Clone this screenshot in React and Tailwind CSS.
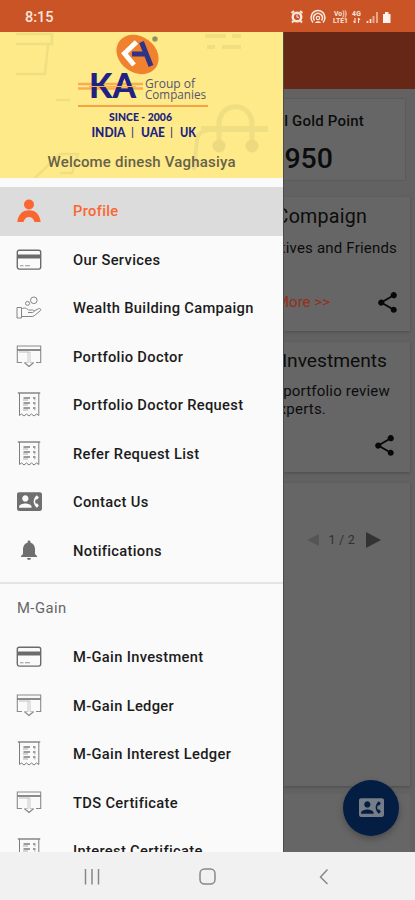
import { MdContactPhone, MdNotifications, MdShare } from 'react-icons/md';

function ProfileIcon() {
  return (
    <svg width="26" height="26" viewBox="0 0 26 26" fill="#fb6630">
      <circle cx="13" cy="6.500" r="5" />
      <path d="M1.300 24C2 17 6 12.300 13 12.300S24 17 24.700 24H18.500C17.500 20.500 15.500 19 13 19S8.500 20.500 7.500 24Z" />
    </svg>
  );
}

function CardIcon() {
  return (
    <svg width="26" height="26" viewBox="0 0 26 26" fill="none" stroke="#6b6b6b">
      <rect x="1.300" y="3.300" width="23.400" height="18.800" rx="2" strokeWidth="1.400" />
      <path d="M1.500 9.500H24.500" strokeWidth="4" />
      <path d="M4 18.700H7.500M9 18.700H14" strokeWidth="1.100" stroke="#929292" />
    </svg>
  );
}

function HandIcon() {
  return (
    <svg width="26" height="26" viewBox="0 0 26 26" fill="none" stroke="#858585" strokeWidth="1" strokeLinejoin="round">
      <circle cx="17.800" cy="5.300" r="3.300" />
      <circle cx="11.500" cy="8.400" r="2" />
      <path d="M1 12.500H5.500V23H1ZM5.500 14C9 12 10.500 13.500 12.500 15H16.500C18.500 15 18.300 17.500 16.500 17.500H12M18 16L22.500 13.700C24.500 13 25.500 14.500 24 16L18.500 20.500C17.500 21.300 16.500 21.500 15 21.500H5.500" />
    </svg>
  );
}

function DownloadIcon() {
  return (
    <svg width="26" height="26" viewBox="0 0 26 26" fill="none" stroke="#8a8a8a">
      <path d="M6 18.500H1.300V2H24.700V18.500H20" strokeWidth="1.100" />
      <path d="M1.300 6H24.700" strokeWidth="1.700" stroke="#777777" />
      <path d="M3 8H12" strokeWidth="0.800" stroke="#b0b0b0" />
      <path d="M12 8V18.500H8.500L13 22.500L17.500 18.500H14V8Z" strokeWidth="0.700" stroke="#b5b5b5" />
      <path d="M8.500 18.800L13 22.500L17.500 18.800" strokeWidth="1.200" />
    </svg>
  );
}

function ReceiptIcon() {
  return (
    <svg width="26" height="26" viewBox="0 0 26 26" fill="none" stroke="#7d7d7d">
      <path d="M1.800 1H24.200" strokeWidth="1.400" />
      <path d="M3.500 1.300V23.500L5.500 22L8 24L10.500 22L13 24L15.500 22L18 24L20.500 22L22.800 23.500V1.300" strokeWidth="1" />
      <path d="M7.500 6H14M7.500 11H14M7.500 16H14M17 6H19.500M17 11H19.500M17 16H19.500" strokeWidth="1.500" />
      <path d="M7 8H12M7 13H12M7 18H12M18 7.800H19.500M18 12.800H19.500M18 17.800H19.500" strokeWidth="0.800" stroke="#999999" />
    </svg>
  );
}

function ContactIcon() {
  return <MdContactPhone size={25} color="#6f6f6f" className="-mt-[2px]" />;
}

function BellIcon() {
  return <MdNotifications size={24} color="#6f6f6f" className="-mt-[2px]" />;
}

const mainItems = [
  { label: 'Profile', icon: ProfileIcon, active: true },
  { label: 'Our Services', icon: CardIcon },
  { label: 'Wealth Building Campaign', icon: HandIcon },
  { label: 'Portfolio Doctor', icon: DownloadIcon },
  { label: 'Portfolio Doctor Request', icon: ReceiptIcon },
  { label: 'Refer Request List', icon: ReceiptIcon },
  { label: 'Contact Us', icon: ContactIcon },
  { label: 'Notifications', icon: BellIcon },
];

const gainItems = [
  { label: 'M-Gain Investment', icon: CardIcon },
  { label: 'M-Gain Ledger', icon: DownloadIcon },
  { label: 'M-Gain Interest Ledger', icon: ReceiptIcon },
  { label: 'TDS Certificate', icon: DownloadIcon },
  { label: 'Interest Certificate', icon: ReceiptIcon },
];

function MenuItem({ label, icon: Icon, active }) {
  return (
    <li className={`flex h-[48.5px] shrink-0 items-center pl-4 ${active ? 'bg-[#dcdcdc] text-[#fb6630]' : 'text-[#1c1c1c]'}`}>
      <span className="flex w-[26px] justify-center">
        <Icon />
      </span>
      <span className="ml-[31px] whitespace-nowrap text-[14.7px] font-medium leading-[22px] tracking-[0.33px]">{label}</span>
    </li>
  );
}

function StatusBar() {
  return (
    <div className="flex h-8 shrink-0 items-center justify-between bg-[#cb5427] pl-[25px] pr-[23px] pt-[2px] text-[#fbe6dc]">
      <span className="pt-[2px] text-[14.5px] font-medium">8:15</span>
      <svg width="102" height="16" viewBox="0 0 102 16" fill="none" stroke="#fbe6dc">
        {/* alarm */}
        <circle cx="7" cy="8" r="4.300" strokeWidth="2.400" />
        <path d="M1.500 4L4 2M12.500 4L10 2M3.500 12L2 13.500M10.500 12L12 13.500" strokeWidth="2" />
        <path d="M7 5.500V8.300H9" strokeWidth="1" />
        {/* hotspot */}
        <path d="M23 13.500A7 7 0 1 1 33 13.500M24.500 11.500A4.400 4.400 0 1 1 31.500 11.500" strokeWidth="1.500" />
        <circle cx="28" cy="9" r="1.700" strokeWidth="1.200" />
        <path d="M25 14C25.500 11.500 30.500 11.500 31 14Z" fill="#fbe6dc" stroke="none" />
        <g fill="#fbe6dc" stroke="none" fontWeight="700" fontSize="6.800">
          <text x="44" y="6.500" textLength="13">Vo))</text>
          <text x="43" y="14.300" textLength="15">LTE1</text>
          <text x="62" y="6.500" textLength="9">4G</text>
        </g>
        <path d="M65 9V14M63.500 12L65 14M68.500 14V9M70 11L68.500 9" strokeWidth="1.100" />
        {/* signal */}
        <path d="M77.500 14V12M80.500 14V10" strokeWidth="1.700" />
        <path d="M83.500 14V7M87 14V3" strokeWidth="2" stroke="#e7a78d" />
        {/* battery */}
        <path d="M93 5H95V3H98.500V5H100.500V14H93Z" fill="#fff3ec" stroke="none" />
      </svg>
    </div>
  );
}

function DrawerHeader() {
  return (
    <div className="h-[146px] shrink-0 bg-[#feea89]">
      <svg width="283" height="146" viewBox="0 0 283 146">
        {/* faint background shapes */}
        <g fill="none" stroke="#f0de82" strokeWidth="2.500">
          <path d="M16 2H52V12H16M48 13L45 42H16M56 68H70M35 146L60 122H78L72 141H60" />
          <path d="M194 138L197 108Q198 97 214 98" strokeWidth="4" />
          <path d="M205 4H226M232 4H241M207 15H215M222 15H241" strokeWidth="4" />
          <path d="M201 97H268" strokeWidth="6" />
          <path d="M219 109V92C219 69 252 69 252 92V109" strokeWidth="5" />
        </g>
        <g fill="#edda7e">
          <circle cx="219" cy="114" r="6.500" />
          <circle cx="252" cy="114" r="6.500" />
        </g>
        <ellipse cx="137.500" cy="22.500" rx="22.500" ry="18" transform="rotate(36 137.500 22.500)" fill="#f0812f" />
        <path d="M136.500 10L124.500 21.500L134 33" fill="none" stroke="#fff" strokeWidth="5" />
        <path d="M141.500 10L151 34M132 22H148" fill="none" stroke="#303485" strokeWidth="5" />
        <circle cx="155" cy="7" r="2.800" fill="#a49c64" />
        <path d="M153.800 8.500V5.800H155.500L156 8.500" fill="none" stroke="#72704e" strokeWidth="0.600" />
        <path d="M78 52H143M78 56.500H143" stroke="#f9ad50" strokeWidth="2.500" />
        <path d="M78 74H208" stroke="#f5a24a" strokeWidth="2" />
        <g fill="#202283" fontFamily="Lato, sans-serif">
          <text x="89" y="66" fontSize="34" fontWeight="900" textLength="47" lengthAdjust="spacingAndGlyphs">KA</text>
          <text x="109" y="88.500" fontSize="10.500" fontWeight="900" textLength="63" lengthAdjust="spacingAndGlyphs">SINCE - 2006</text>
          <g fontSize="12.500" fontWeight="900">
            <text x="91.500" y="104.500" textLength="34" lengthAdjust="spacingAndGlyphs">INDIA</text>
            <text x="141" y="104.500" textLength="24" lengthAdjust="spacingAndGlyphs">UAE</text>
            <text x="180" y="104.500" textLength="16" lengthAdjust="spacingAndGlyphs">UK</text>
          </g>
          <g fontSize="12" fontWeight="400">
            <text x="131" y="104">|</text>
            <text x="170" y="104">|</text>
          </g>
        </g>
        <path d="M89 54.500H136" stroke="#f9ad50" strokeWidth="1.200" />
        <g fill="#56546f" fontFamily="Open Sans, sans-serif" fontSize="12">
          <text x="145" y="55.500" textLength="50" lengthAdjust="spacingAndGlyphs">Group of</text>
          <text x="145" y="67" textLength="61" lengthAdjust="spacingAndGlyphs">Companies</text>
        </g>
        <text x="47.500" y="135.300" fontSize="15" fontWeight="500" fill="#68624a" textLength="188">
          Welcome dinesh Vaghasiya
        </text>
      </svg>
    </div>
  );
}

function Drawer() {
  return (
    <aside className="flex w-[283px] shrink-0 flex-col overflow-hidden bg-[#fafafa]">
      <DrawerHeader />
      <ul className="mt-[9px] shrink-0">
        {mainItems.map((item) => (
          <MenuItem key={item.label} {...item} />
        ))}
      </ul>
      <div className="mt-[7px] shrink-0 border-t-2 border-[#e4e4e4] pt-[14px]">
        <h2 className="pl-[17px] text-[14.8px] leading-[20px] tracking-[0.45px] text-[#666666]">M-Gain</h2>
      </div>
      <ul className="mt-[15px] shrink-0">
        {gainItems.map((item) => (
          <MenuItem key={item.label} {...item} />
        ))}
      </ul>
    </aside>
  );
}

// Home screen, dimmed while the drawer is open
function Home() {
  return (
    <main className="relative flex min-w-0 flex-1 flex-col overflow-hidden border-l border-[#4d4d4d] bg-[#626262] text-[#0c0c0c]">
      <div className="h-[57px] shrink-0 bg-[#672716]" />
      <section className="mr-[9px] mt-[9px] h-[83px] shrink-0 whitespace-nowrap border border-l-0 border-[#5b5b5b] bg-[#666666]">
        <div className="flex justify-end pr-[41px] pt-[12px] text-[15px] font-medium leading-5 tracking-[0.2px]">Total Gold Point</div>
        <div className="flex justify-end pr-[72px] pt-[13px] text-[28.5px] font-medium leading-[30px]">950</div>
      </section>
      <section className="mr-[5px] mt-[16px] h-[134px] shrink-0 whitespace-nowrap bg-[#666666] shadow-[0_1px_3px_#4c4c4c]">
        <div className="flex justify-end pr-[43px] pt-[8px] text-[19.7px] leading-6 tracking-[0.2px]">Refer Compaign</div>
        <div className="flex justify-end pr-[13px] pt-[9px] text-[15px] leading-5 tracking-[0.2px]">Refer Relatives and Friends</div>
        <div className="flex items-center justify-end pr-[10px] pt-[32px]">
          <span className="mr-[45px] text-[15px] leading-[23px] text-[#962e19]">Know More &gt;&gt;</span>
          <MdShare size={25} color="#080808" className="shrink-0" />
        </div>
      </section>
      <section className="mr-[5px] mt-[11px] h-[130px] shrink-0 whitespace-nowrap bg-[#666666] shadow-[0_1px_3px_#4c4c4c]">
        <div className="flex justify-end pr-[23px] pt-[7px] text-[19.2px] leading-6">Review Investments</div>
        <div className="flex justify-end pr-[20px] pt-[9px] text-[15px] leading-[18px] tracking-[0.2px]">Get your portfolio review</div>
        <div className="flex justify-end pr-[84px] text-[15px] leading-[18px] tracking-[0.2px]">by experts.</div>
        <div className="flex justify-end pr-[13px] pt-[15px]">
          <MdShare size={25} color="#080808" />
        </div>
      </section>
      <section className="mr-[5px] mt-[11px] h-[303px] shrink-0 bg-[#666666] shadow-[0_1px_3px_#4c4c4c]">
        <div className="flex items-center justify-end gap-[10px] pr-[29px] pt-[48px] text-[12.5px] tracking-[0.2px] text-[#303030]">
          <svg width="12" height="14" viewBox="0 0 12 14" fill="#555555">
            <path d="M12 1V13L0 7Z" />
          </svg>
          <span>1 / 2</span>
          <svg width="16" height="18" viewBox="0 0 16 18" fill="#333333">
            <path d="M1 1L16 9L1 17Z" />
          </svg>
        </div>
      </section>
      <section className="mr-[5px] mt-[8px] flex-1 bg-[#666666]" />
      <button
        aria-label="Contact"
        className="absolute bottom-[16px] right-[16px] flex size-[56px] items-center justify-center rounded-full bg-[#031d43] shadow-[0_3px_6px_#4c4c4c]"
      >
        <MdContactPhone size={25} color="#777d88" className="-mt-[2px]" />
      </button>
    </main>
  );
}

function NavBar() {
  return (
    <nav className="flex h-12 shrink-0 items-center bg-[#f1f1f1] pl-[83px] pt-[2px]">
      <svg width="250" height="20" viewBox="0 0 250 20" fill="none" stroke="#888888" strokeWidth="1.500">
        <path d="M2.500 2V17.500M9 2V17.500M15.500 2V17.500" />
        <rect x="117" y="2" width="15" height="15" rx="4.500" />
        <path d="M244.500 2.500L237.500 10L244.500 17" />
      </svg>
    </nav>
  );
}

export default function App() {
  return (
    <div className="flex h-[900px] w-[415px] flex-col overflow-hidden font-[Roboto,sans-serif]">
      <StatusBar />
      <div className="flex min-h-0 flex-1">
        <Drawer />
        <Home />
      </div>
      <NavBar />
    </div>
  );
}
